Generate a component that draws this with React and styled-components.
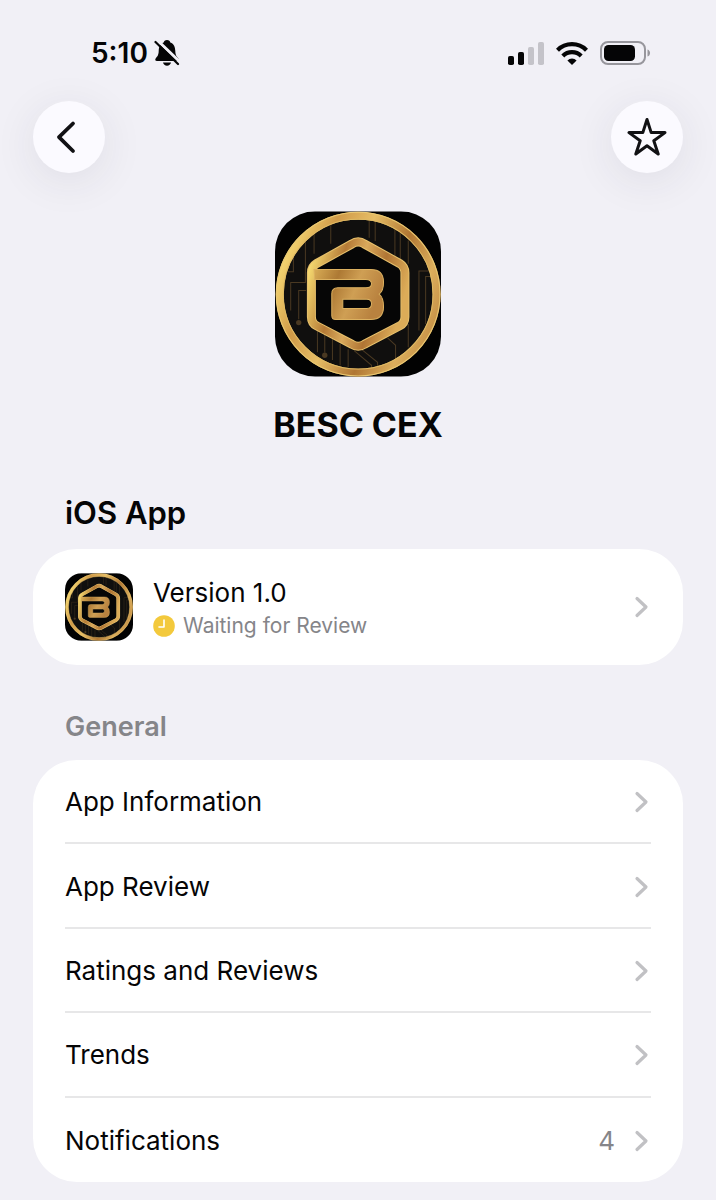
import React, { useId, useState } from 'react';
import styled, { createGlobalStyle } from 'styled-components';

const GlobalStyle = createGlobalStyle`
  * {
    box-sizing: border-box;
  }

  body {
    margin: 0;
    background: #f1f0f6;
    color: #050506;
    font-family: Inter, 'Liberation Sans', sans-serif;
  }
`;

const Screen = styled.div`
  padding: 0 33px 18px;
`;

const StatusBar = styled.header`
  display: flex;
  align-items: center;
  justify-content: space-between;
  height: 101px;
  padding: 5px 32px 0 58px;
`;

const StatusGroup = styled.div`
  display: flex;
  align-items: center;
  gap: ${props => props.$gap}px;
`;

const Time = styled.span`
  font-size: 28px;
  font-weight: 600;
  line-height: 36px;
`;

const Toolbar = styled.nav`
  display: flex;
  justify-content: space-between;
`;

const RoundButton = styled.button`
  display: flex;
  align-items: center;
  justify-content: center;
  width: 72px;
  height: 72px;
  padding: 0;
  border: 0;
  border-radius: 50%;
  background: #fbfaff;
  color: #111114;
  box-shadow: 0 8px 44px rgba(40, 40, 70, 0.09);
  cursor: pointer;
`;

const Hero = styled.section`
  display: flex;
  flex-direction: column;
  align-items: center;
  gap: 26px;
  padding-top: 38px;
`;

const AppName = styled.h1`
  margin: 0;
  font-size: 34px;
  font-weight: 700;
  line-height: 44px;
`;

const SectionTitle = styled.h2`
  margin: 0;
  padding: ${props => (props.$muted ? '44px 32px 15px' : '48px 32px 18px')};
  color: ${props => (props.$muted ? '#858589' : '#050506')};
  font-size: ${props => (props.$muted ? 27 : 31)}px;
  font-weight: 600;
  line-height: 36px;
`;

const VersionCard = styled.a`
  display: flex;
  align-items: center;
  gap: 20px;
  min-height: 116px;
  padding: 0 32px;
  border-radius: 44px;
  background: #ffffff;
  color: inherit;
  text-decoration: none;
`;

const VersionText = styled.div`
  flex: 1;
  padding-top: 2px;
`;

const VersionName = styled.div`
  font-size: 26px;
  line-height: 36px;
`;

const VersionStatus = styled.div`
  display: flex;
  align-items: center;
  gap: 8px;
  color: #858589;
  font-size: 21px;
  line-height: 30px;
`;

const MenuList = styled.ul`
  display: grid;
  grid-auto-rows: 1fr;
  min-height: 422px;
  margin: 0;
  padding: 0 32px;
  border-radius: 44px;
  background: #ffffff;
  list-style: none;
`;

const MenuItem = styled.li`
  display: flex;

  &:not(:last-child) {
    border-bottom: 2px solid #e7e7e8;
  }
`;

const MenuLink = styled.a`
  display: flex;
  flex: 1;
  align-items: center;
  gap: 18px;
  padding-top: 2px;
  color: inherit;
  font-size: 26px;
  line-height: 36px;
  text-decoration: none;
`;

const MenuLabel = styled.span`
  flex: 1;
`;

const MenuCount = styled.span`
  color: #858589;
`;

const MENU = [
  { id: 'information', label: 'App Information' },
  { id: 'review', label: 'App Review' },
  { id: 'ratings', label: 'Ratings and Reviews' },
  { id: 'trends', label: 'Trends' },
  { id: 'notifications', label: 'Notifications', count: 4 },
];

const BellOffIcon = () => (
  <svg width="26" height="28" viewBox="0 0 26 28" aria-hidden="true">
    <path d="M13 1c-2 0-3 1-3.300 2.400C6 4.700 4.800 8 4.700 12c-.1 4-1.200 5.300-2.900 7.200-1.100 1.300-.5 2.800 1.200 2.800h20c1.700 0 2.300-1.500 1.200-2.800-1.700-1.900-2.800-3.200-2.900-7.200-.1-4-1.300-7.300-5-8.600C16 2 15 1 13 1z" fill="#050506" />
    <path d="M9 23.500h8c-.4 2-2 3.200-4 3.200s-3.600-1.200-4-3.200z" fill="#050506" />
    <path d="M3 1l23 22" stroke="#f1f0f6" strokeWidth="3" />
    <path d="M1.500 3L24 25" stroke="#050506" strokeWidth="2.200" strokeLinecap="round" />
  </svg>
);

const SignalIcon = () => (
  <svg width="36" height="23" viewBox="0 0 36 23" aria-hidden="true">
    <rect x="0" y="14" width="6" height="9" rx="1.800" fill="#050506" />
    <rect x="10" y="10" width="6" height="13" rx="1.800" fill="#050506" />
    <rect x="20" y="5" width="6" height="18" rx="1.800" fill="#c4c3c9" />
    <rect x="30" y="0" width="6" height="23" rx="1.800" fill="#c4c3c9" />
  </svg>
);

const WifiIcon = () => (
  <svg width="32" height="23" viewBox="0 0 32 23" aria-hidden="true">
    <g fill="none" stroke="#050506" strokeWidth="4.200">
      <path d="M1.500 8.200a20.500 20.500 0 0 1 29 0" />
      <path d="M6.800 13.900a13 13 0 0 1 18.400 0" />
    </g>
    <path d="M16 23l-4.600-4.600a6.500 6.500 0 0 1 9.200 0z" fill="#050506" />
  </svg>
);

const BatteryIcon = () => (
  <svg width="51" height="24" viewBox="0 0 51 24" aria-hidden="true">
    <rect x="1" y="1" width="44" height="22" rx="7" fill="none" stroke="#97969c" strokeWidth="2" />
    <rect x="4" y="4" width="31" height="16" rx="4.500" fill="#050506" />
    <path d="M47.500 8.500c3.400 1 3.400 6 0 7z" fill="#97969c" />
  </svg>
);

const BackIcon = () => (
  <svg width="36" height="36" viewBox="0 0 36 36" fill="none" stroke="currentColor" strokeWidth="3.800" strokeLinecap="round" strokeLinejoin="round" aria-hidden="true">
    <path d="M22 4.500L8 18.200 22 32" />
  </svg>
);

const StarIcon = () => (
  <svg width="40" height="40" viewBox="0 0 40 40" fill="none" stroke="currentColor" strokeWidth="3" strokeLinejoin="round" aria-hidden="true">
    <path d="M20 2.500L24.200 15.600H38L26.800 23.700 31.200 37 20 28.800 8.800 37 13.200 23.700 2 15.600H15.800z" />
  </svg>
);

const ChevronIcon = () => (
  <svg width="18" height="22" viewBox="0 0 18 22" fill="none" stroke="#c1c1c4" strokeWidth="3.200" strokeLinecap="round" strokeLinejoin="round" aria-hidden="true">
    <path d="M4 2.500L13 11 4 19.500" />
  </svg>
);

const ClockIcon = () => (
  <svg width="22" height="22" viewBox="0 0 22 22" aria-hidden="true">
    <circle cx="11" cy="11" r="10.800" fill="#f3c93c" />
    <path d="M11 5v7H6" fill="none" stroke="#ffffff" strokeWidth="1.600" strokeLinecap="round" strokeLinejoin="round" />
  </svg>
);

const AppIcon = ({ size }) => {
  const id = useId();
  const ring = `${id}ring`;
  const mark = `${id}mark`;
  const hex = `${id}hex`;
  const clip = `${id}clip`;
  const hexPath = 'M263 131Q282 118 301 131L406 189Q422 199 422 217V349Q422 367 406 376L301 431Q282 443 263 431L158 376Q142 367 142 349V217Q142 199 158 189Z';

  return (
    <svg width={size} height={size} viewBox="33 33 497 495" role="img" aria-label="BESC CEX">
      <defs>
        <linearGradient id={ring} x1="0" y1="0.300" x2="1" y2="0.700">
          <stop offset="0" stopColor="#f6d873" />
          <stop offset="0.220" stopColor="#d09a48" />
          <stop offset="0.420" stopColor="#e6bd66" />
          <stop offset="0.650" stopColor="#b07633" />
          <stop offset="0.850" stopColor="#dcae5c" />
          <stop offset="1" stopColor="#c69248" />
        </linearGradient>
        <linearGradient id={hex} x1="0" y1="0.200" x2="1" y2="0.500">
          <stop offset="0" stopColor="#f3d66e" />
          <stop offset="0.300" stopColor="#b47a36" />
          <stop offset="0.500" stopColor="#d9a95c" />
          <stop offset="0.720" stopColor="#b07534" />
          <stop offset="1" stopColor="#dcac58" />
        </linearGradient>
        <linearGradient id={mark} x1="0" y1="0" x2="1" y2="0.300">
          <stop offset="0" stopColor="#d9ad56" />
          <stop offset="0.350" stopColor="#ad7934" />
          <stop offset="0.650" stopColor="#cf9f54" />
          <stop offset="1" stopColor="#b9823f" />
        </linearGradient>
        <clipPath id={clip}>
          <rect x="33" y="33" width="497" height="495" rx="120" />
        </clipPath>
      </defs>
      <g clipPath={`url(#${clip})`}>
        <rect x="33" y="33" width="497" height="495" fill="#020202" />
        <circle cx="282" cy="281" r="230" fill="#100f0e" />
        <g fill="none" stroke="#4a3922" strokeWidth="3">
          <path d="M88 160V214H70M124 118V246H80V330M150 90V160M200 70V130M126 270H104V356" />
          <path d="M315 62V112M333 62V122M392 80V168M408 95V176M432 120V190" />
          <path d="M500 212H464V390M500 228H484V370M432 370V440" />
          <path d="M160 385V455M182 402V456M205 412V478M228 430V494M252 446V500" />
          <path d="M270 450L322 494V510M294 448L340 485V506M370 412L394 434V476" />
        </g>
        <circle cx="104" cy="366" r="8" fill="#4a3922" />
        <circle cx="182" cy="464" r="8" fill="#4a3922" />
        <circle cx="282" cy="281" r="235" fill="none" stroke={`url(#${ring})`} strokeWidth="24" />
        <circle cx="282" cy="281" r="245" fill="none" stroke="#e9c872" strokeWidth="3" />
        <circle cx="282" cy="281" r="224" fill="none" stroke="#dfba64" strokeWidth="3" />
        <path d={hexPath} fill="#060606" stroke="#e6c06b" strokeWidth="27" />
        <path d={hexPath} fill="none" stroke={`url(#${hex})`} strokeWidth="21" />
        <path
          d="M150 207H320Q358 207 358 245Q358 270 345 281Q358 292 358 318Q358 357 320 357H215Q203 357 203 345V280Q203 262 221 262H305Q322 262 322 250Q322 237 305 237H152ZM236 296V324H308Q322 324 322 310Q322 296 308 296Z"
          fill={`url(#${mark})`}
          fillRule="evenodd"
          stroke="#dcb160"
          strokeWidth="3"
        />
      </g>
    </svg>
  );
};

const App = () => {
  const [starred, setStarred] = useState(false);

  return (
    <>
      <GlobalStyle />
      <Screen>
        <StatusBar>
          <StatusGroup $gap={6}>
            <Time>5:10</Time>
            <BellOffIcon />
          </StatusGroup>
          <StatusGroup $gap={12}>
            <SignalIcon />
            <WifiIcon />
            <BatteryIcon />
          </StatusGroup>
        </StatusBar>

        <Toolbar>
          <RoundButton type="button" aria-label="Back">
            <BackIcon />
          </RoundButton>
          <RoundButton
            type="button"
            aria-label="Favorite"
            aria-pressed={starred}
            onClick={() => setStarred(!starred)}
          >
            <StarIcon />
          </RoundButton>
        </Toolbar>

        <main>
          <Hero>
            <AppIcon size={166} />
            <AppName>BESC CEX</AppName>
          </Hero>

          <SectionTitle>iOS App</SectionTitle>
          <VersionCard href="#version">
            <AppIcon size={68} />
            <VersionText>
              <VersionName>Version 1.0</VersionName>
              <VersionStatus>
                <ClockIcon />
                Waiting for Review
              </VersionStatus>
            </VersionText>
            <ChevronIcon />
          </VersionCard>

          <SectionTitle $muted>General</SectionTitle>
          <MenuList>
            {MENU.map(item => (
              <MenuItem key={item.id}>
                <MenuLink href={`#${item.id}`}>
                  <MenuLabel>{item.label}</MenuLabel>
                  {item.count && <MenuCount>{item.count}</MenuCount>}
                  <ChevronIcon />
                </MenuLink>
              </MenuItem>
            ))}
          </MenuList>
        </main>
      </Screen>
    </>
  );
};

export default App;
